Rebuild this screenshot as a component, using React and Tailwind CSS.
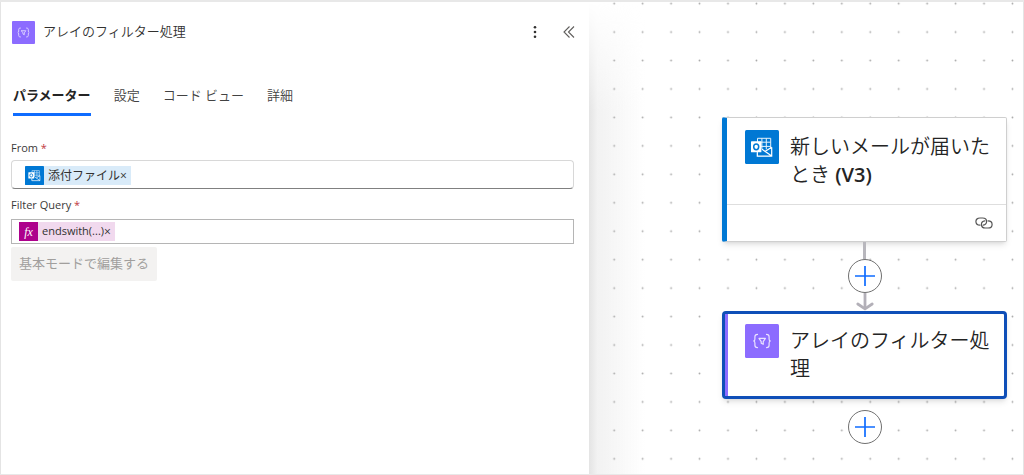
import { useState } from "react";

const tabs = ["パラメーター", "設定", "コード ビュー", "詳細"];

function FilterIcon({ className }) {
  return (
    <svg viewBox="0 0 34 34" className={className} fill="none" aria-hidden="true">
      <rect width="34" height="34" rx="1.5" fill="#8c6cff" />
      <g stroke="#e9e2ff" strokeWidth="1.2" strokeLinejoin="round" strokeLinecap="round">
        <path d="M12.500 10.400c-2 0-2.600.8-2.600 2.300v2.200c0 1.200-.6 2-1.300 2.100.7.1 1.300.9 1.300 2.100v2.200c0 1.500.6 2.300 2.600 2.300" />
        <path d="M21.500 10.400c2 0 2.600.8 2.600 2.300v2.200c0 1.200.6 2 1.300 2.100-.7.1-1.300.9-1.300 2.100v2.200c0 1.500-.6 2.300-2.600 2.300" />
        <path d="M14 14.400h6.400l-2.200 3.200v2.700l-2-1v-1.700z" />
      </g>
    </svg>
  );
}

function OutlookIcon({ className }) {
  return (
    <svg viewBox="0 0 34 34" className={className} fill="none" aria-hidden="true">
      <rect width="34" height="34" rx="1.5" fill="#0078d4" />
      <g stroke="#e6f2fb" strokeWidth="1">
        <path d="M12.500 12V8.300h13.200v17.500H12.500V22" />
        <path d="M16.900 8.300v13M21.300 8.300v11M12.500 12.200h13.200M16 16.400h9.700" />
      </g>
      <path d="M16 18.400l5 3.400 6-4v8.700H12.500V22.400H16z" fill="#0078d4" />
      <path
        d="M26.700 17.300v8.900H12.300v-4M17 19.200l9.700 6.800M20.300 21.300l6.400-4"
        stroke="#fff"
        strokeWidth="1.200"
      />
      <rect x="6" y="11.300" width="10.400" height="11" rx="0.6" fill="#fff" />
      <ellipse cx="11.200" cy="16.800" rx="2.500" ry="2.900" stroke="#0078d4" strokeWidth="1.500" />
    </svg>
  );
}

function LinkIcon() {
  return (
    <svg viewBox="0 0 18 12" className="h-3 w-[18px]" fill="none" stroke="#555" strokeWidth="1.200" strokeLinecap="round">
      <path d="M5 8.200C2.600 8.200.9 6.700.9 4.600S2.600 1 5 1h2.600c2.300 0 4 1.500 4 3.600 0 1.900-1.500 3.300-3.500 3.600" />
      <path d="M13 3.800c2.400 0 4.100 1.500 4.100 3.600S15.400 11 13 11h-2.600c-2.300 0-4-1.500-4-3.600 0-1.900 1.500-3.300 3.500-3.600" />
    </svg>
  );
}

function Token({ icon, className, label, children }) {
  return (
    <span className={`flex h-[19px] shrink-0 items-center text-[#323130] ${className}`}>
      {icon}
      <span className="ml-1">{children}</span>
      <button type="button" aria-label={label} className="mr-1 text-[12px] leading-4">
        ×
      </button>
    </span>
  );
}

function FieldLabel({ htmlFor, children }) {
  return (
    <label htmlFor={htmlFor} className="block text-[11px] leading-4 text-[#3b3a39]">
      {children} <span className="text-[#c0393f]">*</span>
    </label>
  );
}

function AddButton() {
  return (
    <button
      type="button"
      aria-label="新しいステップの挿入"
      className="flex size-[34px] items-center justify-center rounded-full border border-[#707070] bg-white"
    >
      <svg viewBox="0 0 20 20" className="size-5" stroke="#0f6cff" strokeWidth="1.700">
        <path d="M10 0v20M0 10h20" />
      </svg>
    </button>
  );
}

function Panel() {
  const [active, setActive] = useState(0);

  return (
    <section className="relative z-10 w-[57.5%] border-l border-[#e4e4e4] bg-white pr-[15px] pl-2.5">
      <header className="mt-[18px] flex h-6 items-center">
        <FilterIcon className="ml-px size-[23px]" />
        <h1 className="ml-2 flex-1 text-[13px] font-[350] text-[#323130]">アレイのフィルター処理</h1>
        <button type="button" aria-label="その他" className="flex size-6 items-center justify-center">
          <svg viewBox="0 0 4 14" className="h-3.5 w-1" fill="#323130">
            <circle cx="2" cy="2.300" r="1.300" />
            <circle cx="2" cy="7" r="1.300" />
            <circle cx="2" cy="11.700" r="1.300" />
          </svg>
        </button>
        <button type="button" aria-label="折りたたむ" className="ml-2.5 -mr-[7px] flex size-6 items-center justify-center">
          <svg viewBox="0 0 12 12" className="size-3" fill="none" stroke="#605e5c" strokeWidth="1.100">
            <path d="M6.500.5L1 6l5.500 5.500M11 .5L5.500 6l5.500 5.500" />
          </svg>
        </button>
      </header>

      <div role="tablist" className="mt-10 flex gap-[23px] pl-0.5 text-[13px] text-[#424242]">
        {tabs.map((tab, i) => (
          <button
            key={tab}
            type="button"
            role="tab"
            aria-selected={i === active}
            onClick={() => setActive(i)}
            className={`h-8 border-b-3 pb-1.5 ${
              i === active ? "border-[#0f6cff] font-bold text-[#242424]" : "border-transparent font-[350]"
            }`}
          >
            {tab}
          </button>
        ))}
      </div>

      <div className="mt-6">
        <FieldLabel htmlFor="from">From</FieldLabel>
        <div className="mt-1 flex h-[29px] items-center rounded-sm border border-[#d8d8d8] border-b-[#808080] pt-0.5 pl-[13px] text-[12px]">
          <Token
            label="添付ファイルを削除"
            className="bg-[#d9ebf9]"
            icon={<OutlookIcon className="size-[19px]" />}
          >
            添付ファイル
          </Token>
          <input id="from" className="min-w-0 flex-1 outline-none" />
        </div>
      </div>

      <div className="mt-2">
        <FieldLabel htmlFor="query">Filter Query</FieldLabel>
        <div className="mt-1.5 flex h-[25px] items-center border border-[#b5b5b5] pl-[7px] text-[11px]">
          <Token
            label="式を削除"
            className="bg-[#f1d9ee]"
            icon={
              <span className="flex size-[19px] items-center justify-center bg-[#ad008c] font-['Liberation_Serif',serif] text-[12px] text-white italic">
                fx
              </span>
            }
          >
            endswith(...)
          </Token>
          <input id="query" className="min-w-0 flex-1 outline-none" />
        </div>
      </div>

      <button
        type="button"
        disabled
        className="mt-[3px] h-[34px] rounded-xs bg-[#f3f2f1] px-2 text-[13px] text-[#a19f9d]"
      >
        基本モードで編集する
      </button>
    </section>
  );
}

function Canvas() {
  return (
    <main className="relative flex flex-1 justify-end overflow-hidden border-r border-[#e4e4e4] pt-[115px] pr-4">
      <svg className="absolute inset-0 size-full" aria-hidden="true">
        <pattern id="dots" x="11" y="-12.600" width="28.450" height="28.450" patternUnits="userSpaceOnUse">
          <circle cx="14.200" cy="14.200" r="0.900" fill="#a8a8a8" />
        </pattern>
        <rect width="100%" height="100%" fill="url(#dots)" />
      </svg>

      <div className="relative flex w-[285px] flex-col items-center">
        <article className="w-full rounded-xs border border-[#cfcfcf] border-l-[5px] border-l-[#0078d4] bg-white shadow-md">
          <div className="flex h-[87px] border-b border-[#dedede] pt-3 pr-3 pl-[18px]">
            <OutlookIcon className="size-[34px] shrink-0" />
            <h2 className="ml-[11px] pt-[3px] text-[20px] leading-7 font-[350] text-[#242424]">
              新しいメールが届いた
              <wbr />
              とき <span className="inline-block leading-7 font-semibold">(V3)</span>
            </h2>
          </div>
          <div className="flex h-9 items-center justify-end pr-[13px]">
            <LinkIcon />
          </div>
        </article>

        <div className="h-[17px] w-[3px] bg-[#b8b7bd]" />
        <AddButton />
        <svg viewBox="0 0 18 18" className="h-[18px] w-[18px]" fill="none" stroke="#b3b0b8" strokeWidth="2.800">
          <path d="M9 0v15" />
          <path d="M1.800 11L9 15.800l7.200-4.800" strokeLinecap="round" strokeLinejoin="round" />
        </svg>

        <article className="w-full rounded-sm border-[3px] border-[#0f4fb8] bg-white shadow-md">
          <div className="flex h-[82px] border-l-3 border-[#8c6cff] pt-2.5 pr-3 pl-[17px]">
            <FilterIcon className="size-[34px] shrink-0" />
            <h2 className="ml-[11px] pt-[3px] text-[20px] leading-7 font-[350] text-[#242424]">
              アレイのフィルター処理
            </h2>
          </div>
        </article>

        <div className="mt-[11px]">
          <AddButton />
        </div>
      </div>
    </main>
  );
}

export default function App() {
  return (
    <div className="flex min-h-screen border-t-2 border-b border-[#e8e8e8] bg-white font-['Open_Sans','Noto_Sans_CJK_JP',sans-serif]">
      <Panel />
      <div className="relative w-0">
        <div className="absolute inset-y-0 left-0 w-14 bg-linear-to-r from-[#e4e4e4] via-[#f2f2f2] via-15% to-transparent mask-linear-180 mask-linear-from-transparent mask-linear-from-0% mask-linear-to-black mask-linear-to-[110px]" />
      </div>
      <Canvas />
    </div>
  );
}
